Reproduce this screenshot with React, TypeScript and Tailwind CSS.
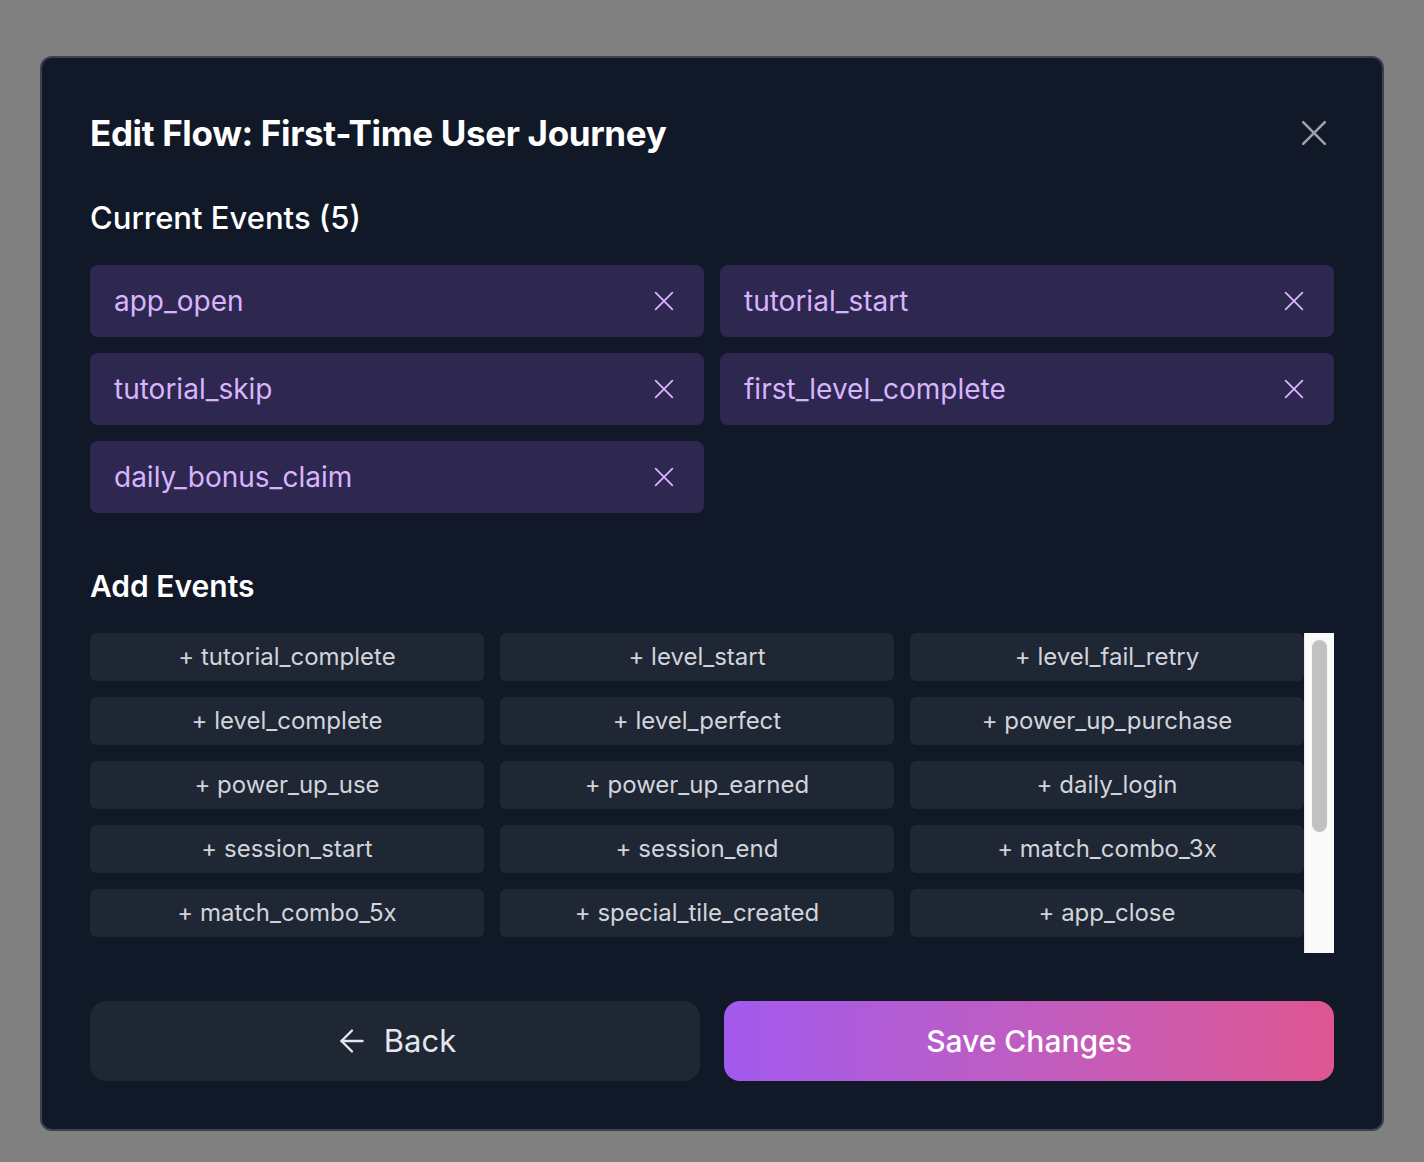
import { ArrowLeft } from "lucide-react";

const currentEvents = [
  "app_open",
  "tutorial_start",
  "tutorial_skip",
  "first_level_complete",
  "daily_bonus_claim",
];

const availableEvents = [
  "tutorial_complete",
  "level_start",
  "level_fail_retry",
  "level_complete",
  "level_perfect",
  "power_up_purchase",
  "power_up_use",
  "power_up_earned",
  "daily_login",
  "session_start",
  "session_end",
  "match_combo_3x",
  "match_combo_5x",
  "special_tile_created",
  "app_close",
];

function XIcon({ size, stroke }: { size: number; stroke: number }) {
  return (
    <svg
      width={size}
      height={size}
      viewBox="0 0 24 24"
      fill="none"
      stroke="currentColor"
      strokeWidth={stroke}
      strokeLinecap="round"
    >
      <path d="M2 2 22 22M22 2 2 22" />
    </svg>
  );
}

export default function App() {
  return (
    <div
      className="min-h-screen bg-[#808080] px-10 pt-[56px] pb-8"
      style={{ fontFamily: "Inter, 'Noto Sans', sans-serif" }}
    >
      <div className="rounded-xl border-2 border-[#3a4252] bg-[#111827] p-12">
        {/* Header */}
        <div className="flex h-[54px] items-center justify-between">
          <h1 className="text-[35px] font-bold tracking-[-0.01em] text-white">
            Edit Flow: First-Time User Journey
          </h1>
          <button className="flex h-10 w-10 items-center justify-center text-[#9ca3af]">
            <XIcon size={26} stroke={2.4} />
          </button>
        </div>

        {/* Current events */}
        <h2 className="mt-10 mb-[29px] text-[31px] leading-[36px] font-medium text-white">
          Current Events ({currentEvents.length})
        </h2>
        <div className="grid grid-cols-2 gap-4">
          {currentEvents.map((ev) => (
            <div
              key={ev}
              className="flex h-[72px] items-center justify-between rounded-lg bg-[#2e2750] pr-[30px] pl-6"
            >
              <span className="text-[28px] text-[#d8b4fe]">{ev}</span>
              <span className="text-[#d8b4fe]">
                <XIcon size={20} stroke={2.2} />
              </span>
            </div>
          ))}
        </div>

        {/* Add events */}
        <h2 className="mt-[55px] mb-[29px] text-[30px] leading-[36px] font-semibold text-white">
          Add Events
        </h2>
        <div className="flex h-[320px]">
          <div className="flex-1 overflow-hidden">
            <div className="grid grid-cols-3 gap-4">
              {availableEvents.map((ev) => (
                <button
                  key={ev}
                  className="flex h-12 items-center justify-center rounded-md bg-[#1f2634] text-[24px] text-[#d1d5db]"
                >
                  + {ev}
                </button>
              ))}
            </div>
          </div>
          {/* scrollbar */}
          <div className="w-[30px] border-l border-[#e8e8e8] bg-[#fafafa] px-[7px] pt-[7px]">
            <div className="h-[192px] rounded-full bg-[#c1c1c1]" />
          </div>
        </div>

        {/* Footer buttons */}
        <div className="mt-12 grid grid-cols-2 gap-6">
          <button className="flex h-20 items-center justify-center gap-[14px] rounded-2xl bg-[#1f2634] text-[31px] text-[#e5e7eb]">
            <ArrowLeft size={36} strokeWidth={1.6} />
            Back
          </button>
          <button className="flex h-20 items-center justify-center rounded-2xl bg-linear-to-r from-[#a259ee] to-[#de5591] text-[30px] font-medium text-white">
            Save Changes
          </button>
        </div>
      </div>
    </div>
  );
}
